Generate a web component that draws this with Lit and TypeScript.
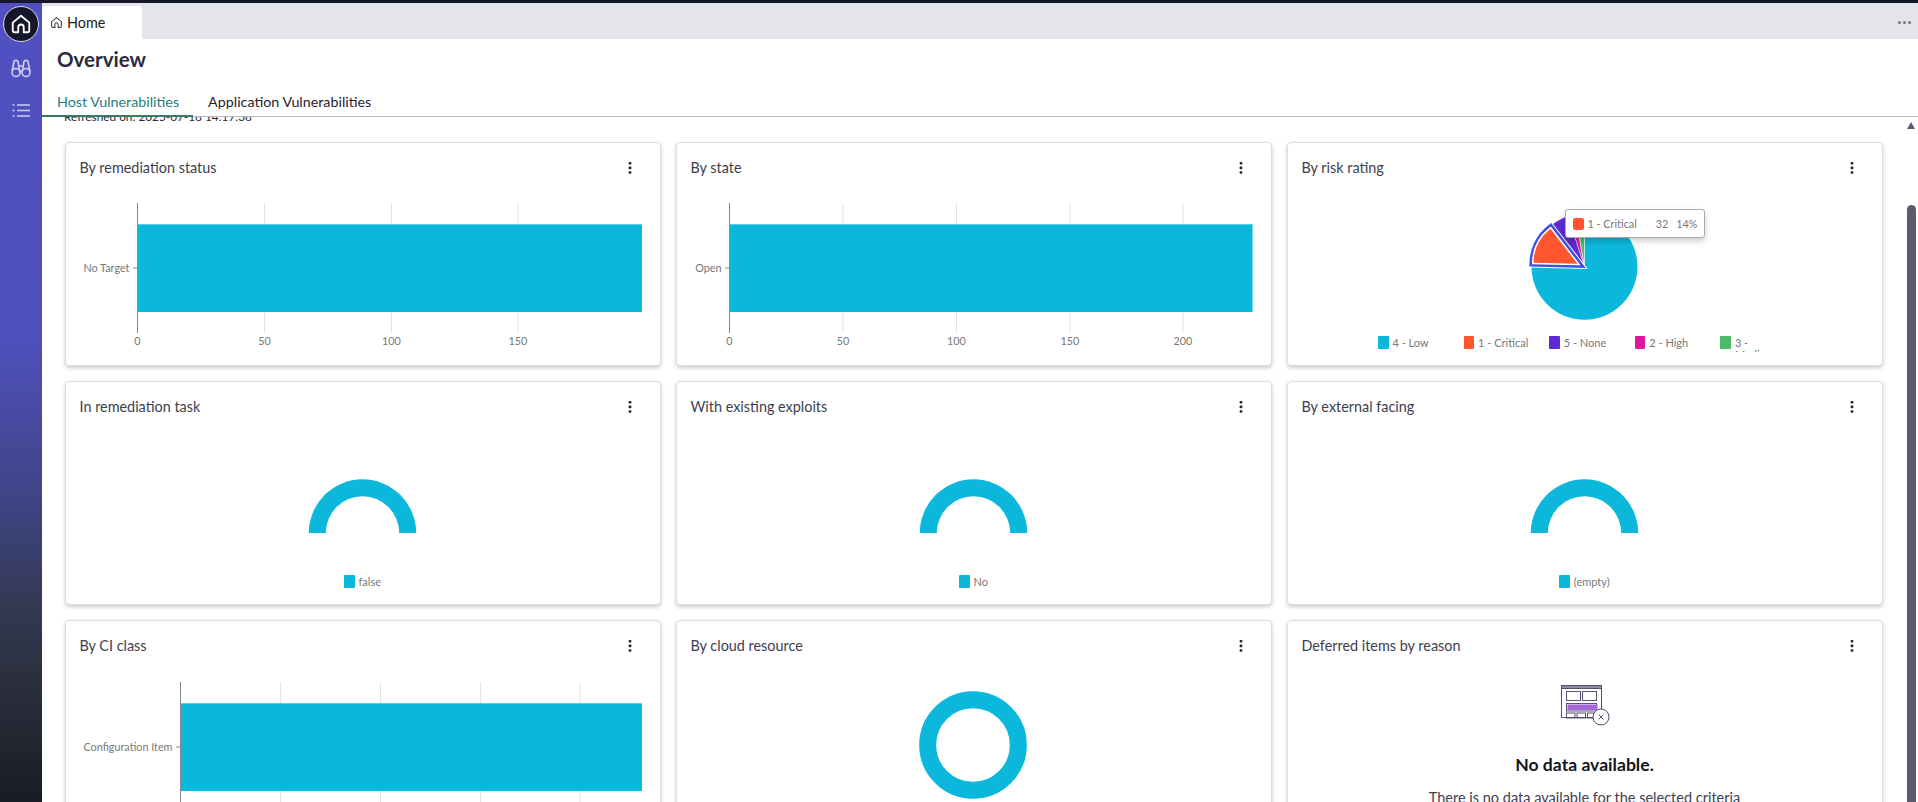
import { LitElement, html, css, svg } from "lit";
import { customElement } from "lit/decorators.js";

const CYAN = "#0bb8dc";
const houseD = "M3 10.5 12 3l9 7.5V19a2 2 0 0 1-2 2h-4v-5.5a3 3 0 0 0-6 0V21H5a2 2 0 0 1-2-2z";

function polar(r: number, deg: number, cx = 0, cy = 0) {
  const a = (deg * Math.PI) / 180;
  return [cx + r * Math.sin(a), cy - r * Math.cos(a)];
}
function slice(r: number, a: number, b: number) {
  const [x1, y1] = polar(r, a);
  const [x2, y2] = polar(r, b);
  return `M0 0L${x1} ${y1}A${r} ${r} 0 ${b - a > 180 ? 1 : 0} 1 ${x2} ${y2}Z`;
}

interface BarCfg {
  axis: number; right: number; grid: number[]; ticks: string[];
  top: number; bottom: number; barTop: number; barBottom: number; label: string; labelY: number;
}

function barChart(c: BarCfg) {
  return html`<svg class="chart" width="594" height="174" viewBox="0 0 594 174">
    ${c.grid.map((x) => svg`<line x1=${x} x2=${x} y1=${c.top} y2=${c.bottom} stroke="#e4e4e8"/>`)}
    <rect x=${c.axis} y=${c.barTop} width=${c.right - c.axis} height=${c.barBottom - c.barTop} fill=${CYAN}/>
    <rect x=${c.axis} y=${c.barTop} width=${c.right - c.axis} height="1" fill="#5ccde6"/>
    <line x1=${c.axis} x2=${c.axis} y1=${c.top} y2=${c.bottom} stroke="#8a8a8a"/>
    <line x1=${c.axis - 4.5} x2=${c.axis} y1=${c.labelY} y2=${c.labelY} stroke="#8a8a8a"/>
    <text class="tick" x=${c.axis - 8} y=${c.labelY + 4} text-anchor="end">${c.label}</text>
    ${c.ticks.map((t, i) => {
      const x = i === 0 ? c.axis : c.grid[i - 1];
      return svg`<text class="tick" x=${x} y="153" text-anchor="middle">${t}</text>`;
    })}
  </svg>`;
}

function halfDonut() {
  return html`<svg class="chart" width="594" height="144" viewBox="0 0 594 144">
    <path transform="translate(296.5 102)" d="M-53.7 0A53.7 53.7 0 0 1 53.7 0H36.7A36.7 36.7 0 0 0-36.7 0Z" fill=${CYAN}/>
  </svg>`;
}

function pie() {
  const hi = "M-7 -3L-51 -4A44 44 0 0 1-34 -38Z";
  return html`<svg class="chart" width="594" height="144" viewBox="0 0 594 144">
    <g transform="translate(296.5 74.7)">
      <path d=${slice(53, 0, 270)} fill=${CYAN}/>
      <path d=${slice(53, 320, 342)} fill="#5e2ad6"/>
      <path d=${slice(53, 342, 350)} fill="#e0169c" stroke="#fff" stroke-width=".6"/>
      <path d=${slice(53, 350, 360)} fill="#4fb96a" stroke="#fff" stroke-width=".6"/>
      <path d=${hi} fill="none" stroke="#fff" stroke-width="10"/>
      <path d=${hi} fill="none" stroke="#3f51e0" stroke-width="8"/>
      <path d=${hi} fill="none" stroke="#fff" stroke-width="3"/>
      <path d=${hi} fill="#ff5630"/>
    </g>
  </svg>`;
}

const kebab = html`<svg class="kebab" width="4" height="12" viewBox="0 0 4 12" fill="#26263a">
  <rect x=".6" y="0" width="2.8" height="2.6" rx=".8"/><rect x=".6" y="4.6" width="2.8" height="2.6" rx=".8"/><rect x=".6" y="9.2" width="2.8" height="2.6" rx=".8"/>
</svg>`;

const emptyIcon = html`<svg class="empty" width="50" height="42" viewBox="0 0 50 42" fill="none" stroke="#55506e" stroke-width="1">
  <rect x=".5" y=".5" width="40" height="32" fill="#fff"/>
  <rect x=".5" y=".5" width="40" height="3" fill="#8e8aa0"/>
  <rect x="5.5" y="6.5" width="14" height="9"/>
  <rect x="21.5" y="6.5" width="14" height="9"/>
  <rect x="5.5" y="18.5" width="30" height="7.5"/>
  <rect x="6.5" y="19.5" width="30" height="5.5" fill="#a565dc" stroke="none"/>
  <rect x="5.5" y="28" width="8.5" height="5"/>
  <rect x="16" y="28" width="8.5" height="5"/>
  <rect x="26.5" y="28" width="8" height="5"/>
  <circle cx="40" cy="32" r="8" fill="#fff"/>
  <path d="M37.6 29.6l4.8 4.8M42.4 29.6l-4.8 4.8"/>
</svg>`;

@customElement("app-root")
export class AppRoot extends LitElement {
  static styles = css`
    :host { display: block; width: 1918px; height: 802px; overflow: hidden; background: #fff; font-family: Lato, "Open Sans", sans-serif; color: #2b2b40; }
    .topline { height: 3px; background: #17172b; }
    .shell { display: flex; height: 799px; }
    .side { width: 42px; flex: none; display: flex; flex-direction: column; align-items: center; background: linear-gradient(180deg, #5050c2 0%, #4e50bc 42%, #3f4586 62%, #333951 76%, #282c38 88%, #191c26 100%); }
    .logo { width: 36px; height: 36px; margin-top: 3px; box-sizing: border-box; border-radius: 50%; background: #16162a; border: 1px solid #dcdce8; display: flex; align-items: center; justify-content: center; }
    .bino { margin-top: 16px; }
    .list { margin-top: 25px; }
    .main { flex: 1; min-width: 0; display: flex; flex-direction: column; }
    .strip { height: 36px; flex: none; background: #e4e5ea; display: flex; justify-content: space-between; }
    .hometab { width: 100px; margin-top: 3px; box-sizing: border-box; background: #fff; border-radius: 3px 3px 0 0; padding: 0 0 1px 8px; display: flex; align-items: center; gap: 4px; font-size: 14.4px; color: #222; }
    .more { display: flex; gap: 2px; margin: 18px 7px 0 0; }
    .more i { width: 3px; height: 3px; border-radius: 50%; background: #777; }
    .head { flex: none; height: 78px; box-sizing: border-box; border-bottom: 1px solid #b8b8bc; position: relative; padding-left: 15px; }
    h1 { margin: 0; padding-top: 6px; font-size: 20.5px; line-height: 28px; font-weight: 700; color: #2b2b40; }
    .tabs { display: flex; gap: 29px; margin-top: 19px; font-size: 14.3px; line-height: 20px; }
    .tabs .on { color: #24807f; }
    .tabs span { color: #1e1e30; }
    .bar { position: absolute; left: 0; bottom: -1px; width: 151px; height: 2px; background: #3a7a60; }
    .scroll { flex: 1; min-height: 0; display: flex; overflow: hidden; }
    .content { flex: 1; min-width: 0; padding: 0 25.5px 0 22.5px; }
    .refreshed { margin: -8px 0 0 -0.5px; height: 16px; line-height: 16px; font-size: 11.8px; color: #2b2b40; }
    .grid { margin-top: 17px; display: grid; grid-template-columns: repeat(3, 1fr); gap: 15px; }
    .card { height: 224px; box-sizing: border-box; position: relative; background: #fff; border: 1px solid #dcdce2; border-radius: 4px; box-shadow: 0 2px 4px rgba(0, 0, 0, .2); }
    .chead { height: 49px; box-sizing: border-box; padding: 0 28px 0 14px; display: flex; align-items: center; justify-content: space-between; font-size: 14.4px; color: #3e3e4e; }
    .chead span { padding-bottom: 1px; }
    .chart { display: block; }
    .tick { font-size: 10.8px; fill: #777; font-family: Lato, sans-serif; }
    .legend { height: 16px; overflow: hidden; display: flex; font-size: 11px; line-height: 13px; color: #777; }
    .legend.center { justify-content: center; }
    .legend.pielegend { padding-left: 90.5px; height: 16px; line-height: 11.5px; }
    .li { display: flex; gap: 4px; align-items: flex-start; }
    .pielegend .li { width: 85.6px; flex: none; }
    .sw { width: 10.5px; height: 13px; flex: none; border-radius: 1px; }
    .lt { display: block; }
    .pielegend .lt { padding-top: 1px; }
    .narrow { width: 30px; }
    .tip { position: absolute; left: 277px; top: 66px; width: 140px; height: 29px; box-sizing: border-box; background: #fff; border: 1px solid #a9a9b0; border-radius: 3px; box-shadow: 0 3px 6px rgba(0, 0, 0, .2); display: flex; align-items: center; padding: 0 6px 0 7px; font-size: 10.8px; color: #777; }
    .tip .sw { width: 11px; height: 12px; margin-right: 4px; border-radius: 2px; }
    .tip .name { flex: 1; }
    .tip .pct { margin-left: 8px; }
    .nodata { display: flex; flex-direction: column; align-items: center; padding-top: 15px; }
    .empty { margin-left: 2px; }
    h3 { margin: 27px 0 12px; font-size: 17.6px; line-height: 22px; font-weight: 700; color: #141420; }
    .nodata p { margin: 0; font-size: 14.5px; line-height: 20px; color: #3e3e4e; }
    .rail { width: 11px; flex: none; display: flex; flex-direction: column; }
    .up { width: 0; height: 0; margin-top: 5px; border-left: 4.5px solid transparent; border-right: 4.5px solid transparent; border-bottom: 7px solid #5c5a6e; }
    .thumb { width: 9px; flex: 1; margin-top: 76px; background: #5c5a6e; border-radius: 4.5px 4.5px 0 0; }
  `;

  private card(title: string, body: unknown, extra: unknown = "") {
    return html`<div class="card"><div class="chead"><span>${title}</span>${kebab}</div>${body}${extra}</div>`;
  }

  private donutLegend(label: string) {
    return html`<div class="legend center"><div class="li"><span class="sw" style="background:${CYAN}"></span><span class="lt">${label}</span></div></div>`;
  }

  render() {
    const pieLegend = [
      ["4 - Low", CYAN, ""],
      ["1 - Critical", "#ff5630", ""],
      ["5 - None", "#5e2ad6", ""],
      ["2 - High", "#e0169c", ""],
      ["3 - Medium", "#4fb96a", "narrow"],
    ];
    return html`
      <div class="topline"></div>
      <div class="shell">
        <nav class="side">
          <div class="logo">
            <svg width="22" height="22" viewBox="0 0 24 24" fill="none" stroke="#fff" stroke-width="2" stroke-linejoin="round"><path d=${houseD}/></svg>
          </div>
          <svg class="bino" width="20" height="20" viewBox="0 0 20 20" fill="none" stroke="#cfcff0" stroke-width="1.6" stroke-linejoin="round">
            <circle cx="5" cy="14.5" r="4"/><circle cx="15" cy="14.5" r="4"/>
            <path d="M1.2 13 3 3.5C3.2 2 6.8 2 7 3.5L8.6 13M18.8 13 17 3.5C16.8 2 13.2 2 13 3.5L11.4 13M8.6 8h2.8M8.8 13.5h2.4"/>
          </svg>
          <svg class="list" width="18" height="15" viewBox="0 0 18 15" fill="none" stroke="#cfcff0" stroke-width="1.5">
            <path d="M5 2h13M5 7.5h13M5 13h13M.5 2h2M.5 7.5h2M.5 13h2"/>
          </svg>
        </nav>
        <div class="main">
          <div class="strip">
            <div class="hometab">
              <svg width="13" height="13" viewBox="0 0 24 24" fill="none" stroke="#444" stroke-width="2" stroke-linejoin="round"><path d=${houseD}/></svg>
              Home
            </div>
            <div class="more"><i></i><i></i><i></i></div>
          </div>
          <header class="head">
            <h1>Overview</h1>
            <div class="tabs"><span class="on">Host Vulnerabilities</span><span>Application Vulnerabilities</span></div>
            <div class="bar"></div>
          </header>
          <div class="scroll">
            <div class="content">
              <div class="refreshed">Refreshed on: 2025-07-18 14:17:38</div>
              <div class="grid">
                ${this.card("By remediation status", barChart({ axis: 71.5, right: 576, grid: [198.5, 325.5, 452], ticks: ["0", "50", "100", "150"], top: 11, bottom: 141, barTop: 32, barBottom: 120, label: "No Target", labelY: 76 }))}
                ${this.card("By state", barChart({ axis: 52.5, right: 575.5, grid: [166, 279.5, 393, 506], ticks: ["0", "50", "100", "150", "200"], top: 11, bottom: 141, barTop: 32, barBottom: 120, label: "Open", labelY: 76 }))}
                ${this.card(
                  "By risk rating",
                  html`${pie()}<div class="legend pielegend">${pieLegend.map(
                    ([t, c, k]) => html`<div class="li"><span class="sw" style="background:${c}"></span><span class="lt ${k}">${t}</span></div>`
                  )}</div>`,
                  html`<div class="tip"><span class="sw" style="background:#ff5630"></span><span class="name">1 - Critical</span><span>32</span><span class="pct">14%</span></div>`
                )}
                ${this.card("In remediation task", html`${halfDonut()}${this.donutLegend("false")}`)}
                ${this.card("With existing exploits", html`${halfDonut()}${this.donutLegend("No")}`)}
                ${this.card("By external facing", html`${halfDonut()}${this.donutLegend("(empty)")}`)}
                ${this.card("By CI class", barChart({ axis: 114.5, right: 576, grid: [214.5, 314.5, 414.5, 514], ticks: [], top: 12, bottom: 174, barTop: 33, barBottom: 121, label: "Configuration Item", labelY: 77 }))}
                ${this.card("By cloud resource", html`<svg class="chart" width="594" height="144" viewBox="0 0 594 144"><circle cx="296" cy="75" r="45.3" fill="none" stroke=${CYAN} stroke-width="17"/></svg>`)}
                ${this.card("Deferred items by reason", html`<div class="nodata">${emptyIcon}<h3>No data available.</h3><p>There is no data available for the selected criteria</p></div>`)}
              </div>
            </div>
            <div class="rail"><div class="up"></div><div class="thumb"></div></div>
          </div>
        </div>
      </div>
    `;
  }
}
